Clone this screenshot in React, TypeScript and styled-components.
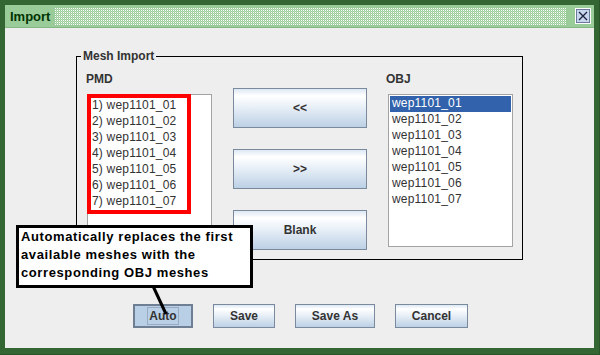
import React from "react";
import styled, { createGlobalStyle } from "styled-components";

const Global = createGlobalStyle`
  html, body { margin: 0; padding: 0; background: #336633; }
  body { font-family: "Liberation Sans", Arial, sans-serif; }
`;

const Frame = styled.div`
  position: relative;
  width: 600px;
  height: 355px;
  box-sizing: border-box;
  background: #336633;
  padding: 5px 5px 6px 5px;
  display: flex;
  flex-direction: column;
  border-right: 1px solid #2a552a;
  border-bottom: 1px solid #2a552a;
`;

const TitleBar = styled.div`
  height: 23px;
  box-sizing: border-box;
  background: #99cc99;
  border-bottom: 1px solid #86b886;
  display: flex;
  align-items: center;
  padding: 0 3px 0 5px;
  gap: 5px;
`;

const TitleText = styled.span`
  font: bold 13px "Liberation Sans", Arial, sans-serif;
  color: #003300;
`;

const Dots = styled.div`
  flex: 1;
  height: 17px;
  background-color: #99cc99;
  margin-right: 4px;
  overflow: hidden;
`;

const DotPattern = styled.svg`
  display: block;
`;

const CloseBtn = styled.div`
  width: 16px;
  height: 16px;
  box-sizing: border-box;
  border: 1px solid #ffffff;
  background: #c8d6ee;
  outline: 1px solid #6a7a9a;
  outline-offset: -2px;
  display: flex;
  align-items: center;
  justify-content: center;
`;

const Content = styled.div`
  flex: 1;
  background: #eeeeee;
  padding: 28px 0 0 71px;
  display: flex;
  flex-direction: column;
`;

const GroupBox = styled.div`
  position: relative;
  width: 447px;
  height: 204px;
  box-sizing: border-box;
  border: 1px solid #000;
  display: flex;
  padding: 0 0 0 10px;
  gap: 21px;
`;

const Legend = styled.span`
  position: absolute;
  top: -8px;
  left: 4px;
  padding: 0 2px;
  background: #eeeeee;
  font: bold 12px "Liberation Sans", Arial, sans-serif;
  color: #333;
  line-height: 14px;
`;

const ListColumn = styled.div<{ $w: number }>`
  width: ${(p) => p.$w}px;
  display: flex;
  flex-direction: column;
  padding-top: 14px;
`;

const ColLabel = styled.div<{ $shift: number }>`
  font: bold 12px "Liberation Sans", Arial, sans-serif;
  color: #333;
  line-height: 14px;
  height: 14px;
  margin: 1px 0 8px ${(p) => p.$shift}px;
`;

const ListBox = styled.div`
  height: 153px;
  box-sizing: border-box;
  background: #fff;
  border: 1px solid #a3a3a3;
  padding: 1px;
`;

const ListItem = styled.div<{ $sel?: boolean; $pad: number }>`
  height: 16px;
  line-height: 16px;
  font: 12px "Liberation Sans", Arial, sans-serif;
  letter-spacing: 0.2px;
  color: ${(p) => (p.$sel ? "#fff" : "#333")};
  background: ${(p) => (p.$sel ? "#3162ab" : "transparent")};
  padding-left: ${(p) => p.$pad}px;
  white-space: nowrap;
`;

const PmdItems = styled.div`
  padding-top: 2px;
`;

const ButtonColumn = styled.div`
  display: flex;
  flex-direction: column;
  gap: 21px;
  padding-top: 31px;
`;

const MetalButton = styled.button<{ $w: number; $h: number; $pressed?: boolean }>`
  width: ${(p) => p.$w}px;
  height: ${(p) => p.$h}px;
  box-sizing: border-box;
  border: ${(p) => (p.$pressed ? "2px solid #6f7f93" : "1px solid #7a8a9c")};
  background: ${(p) =>
    p.$pressed
      ? "#b8cfe5"
      : "linear-gradient(#dde8f3 0%, #ffffff 18%, #eaf1f8 45%, #bcd0e5 100%)"};
  font: bold 12px "Liberation Sans", Arial, sans-serif;
  color: #333;
  padding: 0;
  margin: 0;
  display: flex;
  align-items: center;
  justify-content: center;
`;

const FocusRing = styled.span`
  border: 1px solid #99aac2;
  padding: 2px 1px;
  line-height: 12px;
`;

const BottomRow = styled.div`
  display: flex;
  gap: 20px;
  margin-top: 44px;
  padding-left: 57px;
`;

const RedBox = styled.div`
  position: absolute;
  left: 87px;
  top: 94px;
  width: 104px;
  height: 120px;
  box-sizing: border-box;
  border: 4px solid #ff0000;
  pointer-events: none;
`;

const Tooltip = styled.div`
  position: absolute;
  left: 16px;
  top: 225px;
  width: 237px;
  height: 63px;
  box-sizing: border-box;
  border: 3px solid #000;
  background: #fff;
  padding: 0 0 0 2px;
  font: bold 13px "Liberation Sans", Arial, sans-serif;
  color: #000;
  line-height: 18px;
  letter-spacing: 0.6px;
`;

const Pointer = styled.svg`
  position: absolute;
  left: 0;
  top: 0;
  pointer-events: none;
`;

const pmd = [1, 2, 3, 4, 5, 6, 7].map((n) => `${n}) wep1101_0${n}`);
const obj = [1, 2, 3, 4, 5, 6, 7].map((n) => `wep1101_0${n}`);

export default function App() {
  return (
    <>
      <Global />
      <Frame>
        <TitleBar>
          <TitleText>Import</TitleText>
          <Dots>
            <DotPattern width="520" height="17">
              <defs>
                <pattern id="dots" width="2" height="2" patternUnits="userSpaceOnUse">
                  <rect x="0" y="0" width="1" height="1" fill="#ffffff" />
                  <rect x="1" y="1" width="1" height="1" fill="#b8dcb8" />
                </pattern>
              </defs>
              <rect width="520" height="17" fill="url(#dots)" shapeRendering="crispEdges" />
            </DotPattern>
          </Dots>
          <CloseBtn>
            <svg width="10" height="10" viewBox="0 0 10 10">
              <path d="M1 1 L9 9 M9 1 L1 9" stroke="#1a2440" strokeWidth="1.3" />
            </svg>
          </CloseBtn>
        </TitleBar>
        <Content>
          <GroupBox>
            <Legend>Mesh Import</Legend>
            <ListColumn $w={125}>
              <ColLabel $shift={-1}>PMD</ColLabel>
              <ListBox>
                <PmdItems>
                  {pmd.map((t) => (
                    <ListItem key={t} $pad={3}>
                      {t}
                    </ListItem>
                  ))}
                </PmdItems>
              </ListBox>
            </ListColumn>
            <ButtonColumn>
              <MetalButton $w={134} $h={40}>&lt;&lt;</MetalButton>
              <MetalButton $w={134} $h={40}>&gt;&gt;</MetalButton>
              <MetalButton $w={134} $h={40}>Blank</MetalButton>
            </ButtonColumn>
            <ListColumn $w={125}>
              <ColLabel $shift={-2}>OBJ</ColLabel>
              <ListBox>
                {obj.map((t, i) => (
                  <ListItem key={t} $sel={i === 0} $pad={2}>
                    {t}
                  </ListItem>
                ))}
              </ListBox>
            </ListColumn>
          </GroupBox>
          <BottomRow>
            <MetalButton $w={60} $h={24} $pressed>
              <FocusRing>Auto</FocusRing>
            </MetalButton>
            <MetalButton $w={62} $h={24}>Save</MetalButton>
            <MetalButton $w={80} $h={24}>Save As</MetalButton>
            <MetalButton $w={73} $h={24}>Cancel</MetalButton>
          </BottomRow>
        </Content>
        <RedBox />
        <Tooltip>
          Automatically replaces the first
          <br />
          available meshes with the
          <br />
          corresponding OBJ meshes
        </Tooltip>
        <Pointer width="600" height="355">
          <line x1="153" y1="286" x2="166" y2="314" stroke="#000" strokeWidth="3" />
        </Pointer>
      </Frame>
    </>
  );
}
